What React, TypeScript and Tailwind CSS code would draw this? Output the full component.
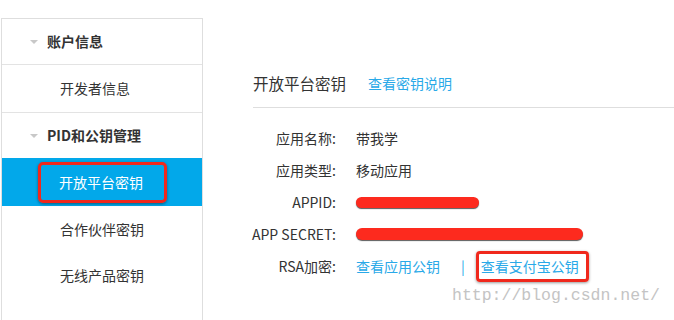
const FONT = "font-['Noto_Sans_CJK_SC','Noto_Sans',sans-serif]";

function GroupHeader({ title, border }: { title: string; border?: boolean }) {
  return (
    <div
      className={`flex items-center pl-[28px] ${border ? "h-[46px] border-b border-[#e3e3e3]" : "h-[45px]"}`}
    >
      <span className="mr-[9px] h-0 w-0 border-x-[4px] border-t-[4px] border-x-transparent border-t-[#c8c8c8]" />
      <span className="text-[14px] font-bold text-[#333]">{title}</span>
    </div>
  );
}

function NavItem({ label, border }: { label: string; border?: boolean }) {
  return (
    <div
      className={`flex items-center pl-[58px] text-[14px] text-[#333] ${border ? "h-[48px] border-b border-[#e3e3e3]" : "h-[46px]"}`}
    >
      {label}
    </div>
  );
}

function Redacted({ width, height }: { width: number; height: number }) {
  return (
    <span
      className="block rounded-full bg-[#fd2a1e] shadow-[0_1px_1px_rgba(0,0,0,0.65)]"
      style={{ width, height }}
    />
  );
}

const rows: { label: string; value: React.ReactNode }[] = [
  { label: "应用名称:", value: "带我学" },
  { label: "应用类型:", value: "移动应用" },
  { label: "APPID:", value: <Redacted width={123} height={11} /> },
  { label: "APP SECRET:", value: <Redacted width={227} height={12} /> },
];

export default function App() {
  return (
    <div className={`relative flex h-[320px] w-[674px] overflow-hidden bg-white ${FONT}`}>
      <aside className="ml-[1px] mt-[18px] flex w-[202px] flex-col border-x border-t border-[#dedede]">
        <GroupHeader title="账户信息" border />
        <NavItem label="开发者信息" border />
        <GroupHeader title="PID和公钥管理" />
        <div className="flex h-[48px] items-center bg-[#02a8ea] pl-[36px]">
          <span className="inline-flex h-[41px] items-center rounded-[5px] border-[3px] border-[#f0281c] pl-[18px] pr-[21px] text-[14px] text-white shadow-[0_1px_3px_rgba(0,0,0,0.45)]">
            开放平台密钥
          </span>
        </div>
        <NavItem label="合作伙伴密钥" />
        <NavItem label="无线产品密钥" />
      </aside>

      <main className="flex-1 pl-[50px] pt-[71px]">
        <div className="flex items-center border-b border-[#dedede] pb-[12px] leading-[24px]">
          <span className="text-[15.5px] text-[#333]">开放平台密钥</span>
          <a className="ml-[22px] cursor-pointer text-[14px] text-[#29a9e8]">查看密钥说明</a>
        </div>

        <div className="mt-[14px] flex flex-col text-[14px] text-[#333]">
          {rows.map((r) => (
            <div key={r.label} className="flex h-[32px] items-center">
              <span className="flex w-[83px] shrink-0 justify-end whitespace-nowrap">{r.label}</span>
              <span className="ml-[20px]">{r.value}</span>
            </div>
          ))}
          <div className="flex h-[32px] items-center">
            <span className="flex w-[83px] shrink-0 justify-end whitespace-nowrap">RSA加密:</span>
            <a className="ml-[20px] cursor-pointer text-[#29a9e8]">查看应用公钥</a>
            <span className="ml-[21px] text-[#29a9e8]">|</span>
            <span className="ml-[11px] inline-flex h-[31px] items-center rounded-[4px] border-[3px] border-[#f0281c] pl-[2px] pr-[7px] shadow-[0_1px_3px_rgba(0,0,0,0.4)]">
              <a className="cursor-pointer text-[#29a9e8]">查看支付宝公钥</a>
            </span>
          </div>
        </div>
      </main>

      <span className="absolute left-[452px] top-[286px] font-['Liberation_Mono',monospace] text-[16.5px] leading-[20px] text-[#c4c4c4]">
        http://blog.csdn.net/
      </span>
    </div>
  );
}
